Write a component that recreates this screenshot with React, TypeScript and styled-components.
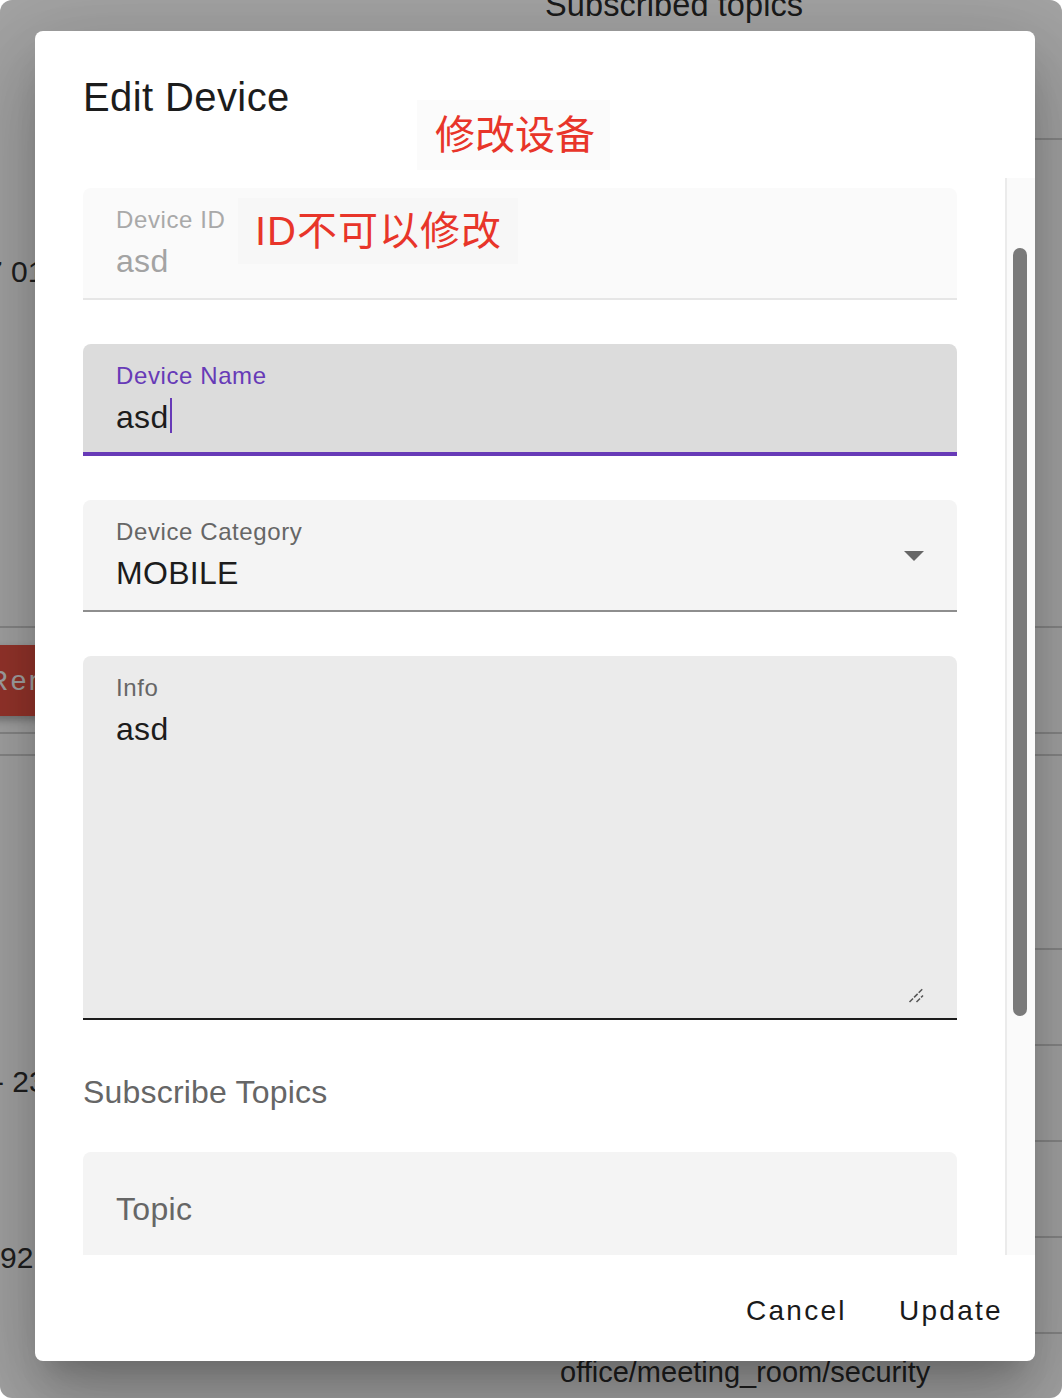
import React from "react";
import styled, { createGlobalStyle, css } from "styled-components";

const GlobalStyle = createGlobalStyle`
  html, body { margin: 0; padding: 0; background: #ffffff; }
  body { font-family: "Liberation Sans", Arial, sans-serif; }
  * { box-sizing: border-box; }
`;

const Screen = styled.div`
  position: relative;
  width: 1062px;
  height: 1398px;
  overflow: hidden;
  border-radius: 12px;
  background: #ffffff;
  font-family: "Liberation Sans", Arial, sans-serif;
`;

/* ---------- background page ---------- */
const Page = styled.div`
  display: flex;
  flex-direction: column;
  color: #313131;
`;

const Row = styled.div<{ $h: number }>`
  display: grid;
  grid-template-columns: 540px 1fr;
  height: ${(p) => p.$h}px;
`;

const Cell = styled.div<{ $line?: boolean; $pt?: number; $pl?: number }>`
  border-bottom: ${(p) => (p.$line ? "2px solid #d2d2d2" : "2px solid transparent")};
  padding-top: ${(p) => p.$pt ?? 0}px;
  padding-left: ${(p) => p.$pl ?? 0}px;
  white-space: nowrap;
  overflow: visible;
`;

const HeaderText = styled.div`
  font-size: 32.5px;
  line-height: 33px;
  letter-spacing: 0.1px;
  margin-top: -11px;
  color: #2b2b2b;
`;

const CellText = styled.div<{ $size?: number; $shift?: number }>`
  font-size: ${(p) => p.$size ?? 30}px;
  line-height: ${(p) => p.$size ?? 30}px;
  margin-left: ${(p) => p.$shift ?? 0}px;
`;

const RemoveButton = styled.div`
  display: inline-flex;
  align-items: center;
  height: 71px;
  margin-left: -44px;
  padding: 0 32px;
  background: #ea5244;
  color: #ffffff;
  font-size: 28px;
  letter-spacing: 2.5px;
  border-radius: 8px;
  box-shadow: 0 4px 8px rgba(0, 0, 0, 0.3);
`;

/* ---------- modal ---------- */
const Backdrop = styled.div`
  position: absolute;
  inset: 0;
  display: flex;
  padding: 31px 27px 37px 35px;
  background: rgba(0, 0, 0, 0.36);
`;

const Dialog = styled.div`
  position: relative;
  flex: 1;
  display: flex;
  flex-direction: column;
  background: #ffffff;
  border-radius: 8px;
  overflow: hidden;
  box-shadow: 0 22px 30px -14px rgba(0, 0, 0, 0.2),
    0 48px 76px 6px rgba(0, 0, 0, 0.14), 0 18px 92px 16px rgba(0, 0, 0, 0.12);
`;

const Title = styled.h2`
  margin: 0;
  height: 147px;
  padding: 34px 48px 0;
  font-size: 40px;
  line-height: 64px;
  font-weight: 400;
  letter-spacing: 0.4px;
  color: #1c1c1c;
`;

const Body = styled.div`
  display: flex;
  height: 1077px;
`;

const Scroll = styled.div`
  flex: 1;
  overflow: hidden;
  padding: 10px 48px 0;
  display: flex;
  flex-direction: column;
`;

const Track = styled.div`
  width: 30px;
  background: #fafafa;
  border-left: 2px solid #ebebeb;
  padding: 70px 0 0 6px;
`;

const Thumb = styled.div`
  width: 14px;
  height: 768px;
  border-radius: 7px;
  background: #7a7a7a;
`;

const FieldStack = styled.div`
  display: flex;
  flex-direction: column;
  gap: 44px;
`;

type Variant = "disabled" | "focused" | "normal" | "hover";

const variantStyles: Record<Variant, ReturnType<typeof css>> = {
  disabled: css`
    background: #fafafa;
    border-bottom: 2px solid #e6e6e6;
  `,
  focused: css`
    background: #dcdcdc;
    border-bottom: 4px solid #673ab7;
  `,
  normal: css`
    background: #f4f4f4;
    border-bottom: 2px solid #8e8e8e;
  `,
  hover: css`
    background: #ebebeb;
    border-bottom: 2px solid #1c1c1c;
  `,
};

const Field = styled.div<{ $variant: Variant; $h?: number; $pt?: number }>`
  flex-shrink: 0;
  display: flex;
  height: ${(p) => p.$h ?? 112}px;
  padding: ${(p) => p.$pt ?? 20}px 33px 0;
  border-radius: 8px 8px 0 0;
  ${(p) => variantStyles[p.$variant]}
`;

const FieldMain = styled.div`
  flex: 1;
  display: flex;
  flex-direction: column;
`;

const Label = styled.div<{ $tone: "muted" | "focus" | "plain" }>`
  font-size: 24px;
  line-height: 24px;
  letter-spacing: 0.6px;
  color: ${(p) =>
    p.$tone === "muted" ? "#a9a9a9" : p.$tone === "focus" ? "#673ab7" : "#666666"};
`;

const Value = styled.div<{ $muted?: boolean }>`
  margin-top: 13px;
  height: 32px;
  font-size: 32px;
  line-height: 32px;
  letter-spacing: 0.3px;
  color: ${(p) => (p.$muted ? "#a3a3a3" : "#1c1c1c")};
  white-space: nowrap;
`;

const Caret = styled.span`
  display: inline-block;
  width: 2px;
  height: 35px;
  margin-top: -10px;
  margin-left: 1px;
  vertical-align: -5px;
  background: #673ab7;
`;

const ArrowIcon = styled.svg`
  flex-shrink: 0;
  margin-top: 31px;
  width: 20px;
  height: 10px;
`;

const Grip = styled.svg`
  align-self: flex-end;
  flex-shrink: 0;
  margin-bottom: 15px;
  width: 16px;
  height: 16px;
`;

const Placeholder = styled.div`
  font-size: 32px;
  line-height: 32px;
  letter-spacing: 0.3px;
  color: #666666;
`;

const Heading = styled.div`
  margin: 48px 0 36px;
  font-size: 32px;
  line-height: 48px;
  letter-spacing: 0.2px;
  color: #666666;
`;

const Actions = styled.div`
  display: flex;
  justify-content: flex-end;
  align-items: center;
  gap: 20px;
  height: 106px;
  padding: 5px 16px 0;
`;

const ActionButton = styled.button`
  border: none;
  background: none;
  padding: 12px 16px;
  font-family: "Liberation Sans", Arial, sans-serif;
  font-size: 28px;
  line-height: 49px;
  letter-spacing: 2.3px;
  color: #1a1a1a;
  cursor: pointer;
`;

const Note = styled.div<{ $bg: string; $ls?: number }>`
  position: absolute;
  display: flex;
  align-items: center;
  background: ${(p) => p.$bg};
  font-family: "Liberation Sans", "Noto Sans CJK SC", sans-serif;
  font-size: 40px;
  line-height: 40px;
  letter-spacing: ${(p) => p.$ls ?? 0}px;
  color: #e8352a;
  white-space: nowrap;
`;

export default function App() {
  return (
    <>
      <GlobalStyle />
      <Screen>
        <Page>
          <Row $h={140}>
            <Cell />
            <Cell $line $pl={5}>
              <HeaderText>Subscribed topics</HeaderText>
            </Cell>
          </Row>
          <Row $h={488}>
            <Cell $line $pt={117}>
              <CellText $shift={-14}>7 01</CellText>
            </Cell>
            <Cell $line />
          </Row>
          <Row $h={106}>
            <Cell $line $pt={17}>
              <RemoveButton>Remove</RemoveButton>
            </Cell>
            <Cell $line />
          </Row>
          <Row $h={22}>
            <Cell $line />
            <Cell $line />
          </Row>
          <Row $h={194}>
            <Cell />
            <Cell $line />
          </Row>
          <Row $h={96}>
            <Cell />
            <Cell $line />
          </Row>
          <Row $h={96}>
            <Cell $pt={21}>
              <CellText $shift={-6}>- 23</CellText>
            </Cell>
            <Cell $line />
          </Row>
          <Row $h={96}>
            <Cell />
            <Cell $line />
          </Row>
          <Row $h={96}>
            <Cell $pt={5}>
              <CellText>92</CellText>
            </Cell>
            <Cell $line />
          </Row>
          <Row $h={64}>
            <Cell />
            <Cell $pt={24} $pl={20}>
              <CellText $size={29}>office/meeting_room/security</CellText>
            </Cell>
          </Row>
        </Page>

        <Backdrop>
          <Dialog>
            <Title>Edit Device</Title>
            <Body>
              <Scroll>
                <FieldStack>
                  <Field $variant="disabled">
                    <FieldMain>
                      <Label $tone="muted">Device ID</Label>
                      <Value $muted>asd</Value>
                    </FieldMain>
                  </Field>
                  <Field $variant="focused">
                    <FieldMain>
                      <Label $tone="focus">Device Name</Label>
                      <Value>
                        asd
                        <Caret />
                      </Value>
                    </FieldMain>
                  </Field>
                  <Field $variant="normal">
                    <FieldMain>
                      <Label $tone="plain">Device Category</Label>
                      <Value>MOBILE</Value>
                    </FieldMain>
                    <ArrowIcon viewBox="0 0 20 10">
                      <path d="M0 0 L10 10 L20 0 Z" fill="#666666" />
                    </ArrowIcon>
                  </Field>
                  <Field $variant="hover" $h={364}>
                    <FieldMain>
                      <Label $tone="plain">Info</Label>
                      <Value>asd</Value>
                    </FieldMain>
                    <Grip viewBox="0 0 16 16">
                      <path
                        d="M1.5 15 L15 1.5 M8.5 15 L15 8.5"
                        stroke="#555555"
                        strokeWidth="1.5"
                        strokeDasharray="5 1.5"
                        fill="none"
                      />
                    </Grip>
                  </Field>
                </FieldStack>
                <Heading>Subscribe Topics</Heading>
                <Field $variant="normal" $pt={41}>
                  <Placeholder>Topic</Placeholder>
                </Field>
              </Scroll>
              <Track>
                <Thumb />
              </Track>
            </Body>
            <Actions>
              <ActionButton>Cancel</ActionButton>
              <ActionButton>Update</ActionButton>
            </Actions>

            <Note $bg="#fbfbfb" style={{ left: 382, top: 69, width: 193, height: 70, paddingLeft: 18 }}>
              修改设备
            </Note>
            <Note $bg="#f7f7f7" $ls={1} style={{ left: 203, top: 167, width: 280, height: 66, paddingLeft: 17 }}>
              ID不可以修改
            </Note>
          </Dialog>
        </Backdrop>
      </Screen>
    </>
  );
}
